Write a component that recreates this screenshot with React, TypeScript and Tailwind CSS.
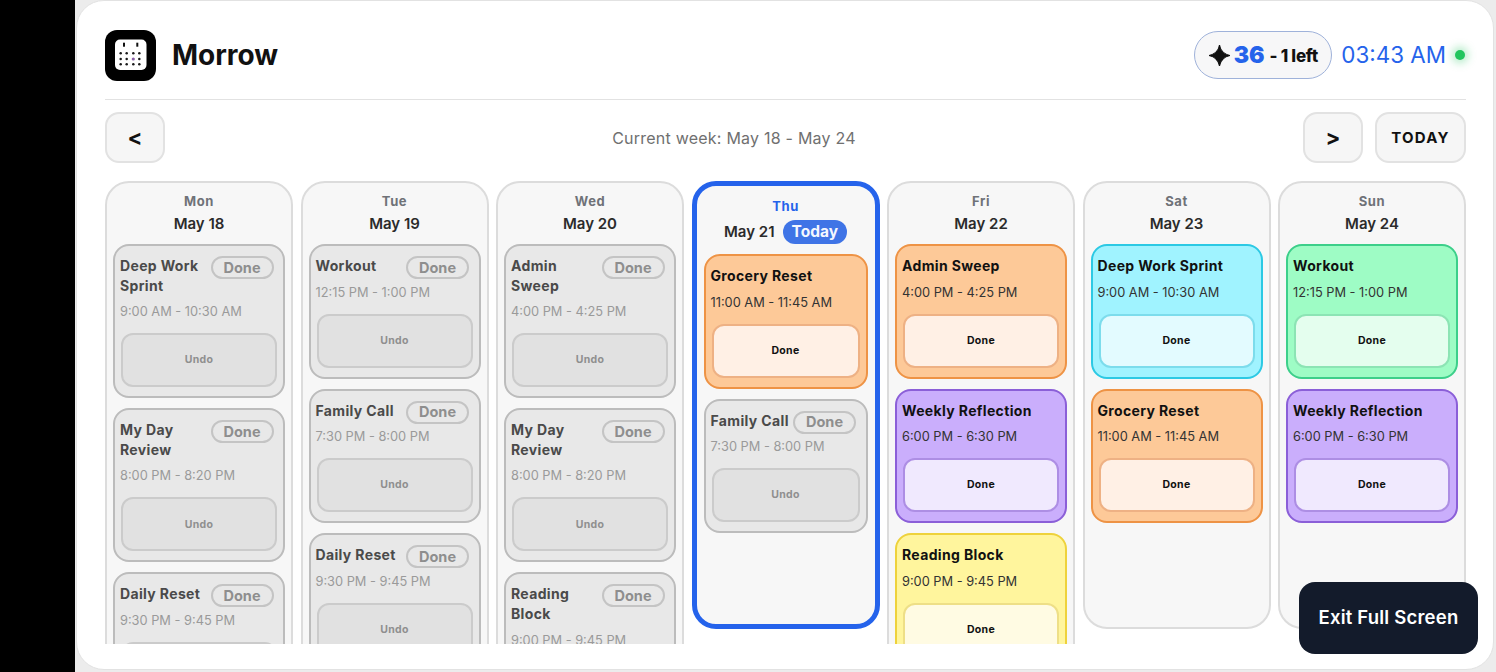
import React from "react";

type Tone = "gray" | "orange" | "purple" | "yellow" | "cyan" | "green";
type Task = { title: string; time: string; tone: Tone };

const tones: Record<Tone, { card: string; btn: string }> = {
  gray: { card: "bg-[#e8e8e8] border-[#bcbcbc]", btn: "bg-[#e1e1e1] border-[#cbcbcb] text-[#8f8f8f]" },
  orange: { card: "bg-[#fdc998] border-[#ee9345]", btn: "bg-[#fff0e5] border-[#eeb184] text-[#111111]" },
  purple: { card: "bg-[#caaefc] border-[#8b5fd8]", btn: "bg-[#f0e9fe] border-[#ad8ee4] text-[#111111]" },
  yellow: { card: "bg-[#fff59d] border-[#eed23c]", btn: "bg-[#fffbe3] border-[#eedf87] text-[#111111]" },
  cyan: { card: "bg-[#a0f3ff] border-[#2cc9e4]", btn: "bg-[#e3fbff] border-[#7cdcec] text-[#111111]" },
  green: { card: "bg-[#9efcc5] border-[#3ccf8a]", btn: "bg-[#e4feee] border-[#8ce4b4] text-[#111111]" },
};

const days: { dow: string; date: string; today?: boolean; tasks: Task[] }[] = [
  { dow: "Mon", date: "May 18", tasks: [
    { title: "Deep Work Sprint", time: "9:00 AM - 10:30 AM", tone: "gray" },
    { title: "My Day Review", time: "8:00 PM - 8:20 PM", tone: "gray" },
    { title: "Daily Reset", time: "9:30 PM - 9:45 PM", tone: "gray" },
  ] },
  { dow: "Tue", date: "May 19", tasks: [
    { title: "Workout", time: "12:15 PM - 1:00 PM", tone: "gray" },
    { title: "Family Call", time: "7:30 PM - 8:00 PM", tone: "gray" },
    { title: "Daily Reset", time: "9:30 PM - 9:45 PM", tone: "gray" },
  ] },
  { dow: "Wed", date: "May 20", tasks: [
    { title: "Admin Sweep", time: "4:00 PM - 4:25 PM", tone: "gray" },
    { title: "My Day Review", time: "8:00 PM - 8:20 PM", tone: "gray" },
    { title: "Reading Block", time: "9:00 PM - 9:45 PM", tone: "gray" },
  ] },
  { dow: "Thu", date: "May 21", today: true, tasks: [
    { title: "Grocery Reset", time: "11:00 AM - 11:45 AM", tone: "orange" },
    { title: "Family Call", time: "7:30 PM - 8:00 PM", tone: "gray" },
  ] },
  { dow: "Fri", date: "May 22", tasks: [
    { title: "Admin Sweep", time: "4:00 PM - 4:25 PM", tone: "orange" },
    { title: "Weekly Reflection", time: "6:00 PM - 6:30 PM", tone: "purple" },
    { title: "Reading Block", time: "9:00 PM - 9:45 PM", tone: "yellow" },
  ] },
  { dow: "Sat", date: "May 23", tasks: [
    { title: "Deep Work Sprint", time: "9:00 AM - 10:30 AM", tone: "cyan" },
    { title: "Grocery Reset", time: "11:00 AM - 11:45 AM", tone: "orange" },
  ] },
  { dow: "Sun", date: "May 24", tasks: [
    { title: "Workout", time: "12:15 PM - 1:00 PM", tone: "green" },
    { title: "Weekly Reflection", time: "6:00 PM - 6:30 PM", tone: "purple" },
  ] },
];

function Logo() {
  const rows = [53.3, 59, 64.3];
  const cols = [120.7, 126.7, 133.3, 139.3];
  return (
    <svg width="51" height="51" viewBox="105 30 51 51" className="shrink-0">
      <rect x="105" y="30" width="51" height="51" rx="12" fill="#000" />
      <rect x="115" y="39.5" width="31.5" height="30.5" rx="5" fill="#fff" />
      <rect x="123" y="42.7" width="2" height="4" fill="#111" />
      <rect x="136.3" y="42.7" width="2" height="4" fill="#111" />
      {rows.map((y, r) =>
        cols.map((x, c) => (
          <circle key={`${r}-${c}`} cx={x} cy={y} r={r === 1 && c === 2 ? 1.6 : 1.25} fill={r === 1 && c === 2 ? "#8b5fa8" : "#1a1a1a"} />
        ))
      )}
    </svg>
  );
}

function Card({ task }: { task: Task }) {
  const t = tones[task.tone];
  const muted = task.tone === "gray";
  return (
    <div className={`rounded-[16px] border-2 px-[6px] pt-[10px] pb-[9px] ${t.card}`}>
      <div className="flex items-start justify-between gap-[3px]">
        <div className={`mb-[8px] -ml-[1px] text-[14px] leading-[19.6px] font-bold tracking-[0.35px] ${muted ? "text-[#4a4a4a]" : "text-[#111111]"}`}>
          {task.title}
        </div>
        {muted && (
          <div className="mr-[3.5px] flex h-[23px] w-[63px] shrink-0 items-center justify-center rounded-full border-2 border-[#c4c4c4] pt-[1px] text-[14.5px] leading-none font-bold text-[#8e8e8e]">
            Done
          </div>
        )}
      </div>
      <div className={`-ml-[1px] text-[12.8px] leading-[18px] ${muted ? "text-[#9a9a9a]" : "text-[#333333]"}`}>{task.time}</div>
      <div className={`mt-[12px] flex h-[54px] items-center justify-center rounded-[12px] border-2 text-[10.5px] font-bold tracking-[0.3px] ${t.btn}`}>
        {muted ? "Undo" : "Done"}
      </div>
    </div>
  );
}

function Column({ day }: { day: (typeof days)[number] }) {
  return (
    <div
      className={`min-h-[448px] self-start rounded-[24px] bg-[#f7f7f7] ${
        day.today ? "border-[5px] border-[#2563eb] px-[7px] pb-[10px]" : "border-2 border-[#dcdcdc] px-[6px] pb-[10px]"
      }`}
    >
      <div className={`flex flex-col items-center ${day.today ? "h-[68px] pt-[11px]" : "h-[61px] pt-[9px]"}`}>
        <div className={`text-[13px] leading-[18px] font-bold tracking-[0.6px] ${day.today ? "text-[#2563eb]" : "text-[#6f7278]"}`}>{day.dow}</div>
        <div className={`flex items-center gap-[8px] text-[15px] leading-[22px] font-semibold text-[#2b2b2b] ${day.today ? "mt-[5px]" : "mt-[2.5px]"}`}>
          {day.date}
          {day.today && (
            <span className="flex h-[24px] items-center rounded-full bg-[#3f74e6] px-[9px] text-[15.5px] font-bold text-[#f4f7ff]">Today</span>
          )}
        </div>
      </div>
      <div className="flex flex-col gap-[10px]">
        {day.tasks.map((t) => (
          <Card key={t.title} task={t} />
        ))}
      </div>
    </div>
  );
}

const navBtn =
  "flex h-[51px] items-center justify-center rounded-[14px] border-2 border-[#e2e2e2] bg-[#f6f6f6] font-bold text-[#111111]";

export default function App() {
  return (
    <div className="relative flex h-[672px] w-full overflow-hidden bg-black font-['Inter',sans-serif]">
      <div className="w-[75px] shrink-0" />
      <div className="flex-1 bg-[#ececec] pr-[2px] pb-[2px] pl-[1px]">
        <div className="flex h-full flex-col rounded-[28px] border border-[#e2e2e2] bg-white pr-[27px] pb-[25px] pl-[28px]">
          <div className="flex h-[99px] shrink-0 items-center justify-between border-b border-[#e2e2e2] pt-[11px]">
            <div className="flex items-center gap-[16px]">
              <Logo />
              <div className="-mt-[2px] text-[28px] leading-none font-bold text-[#111111]">Morrow</div>
            </div>
            <div className="-mt-[1px] flex items-center">
              <div className="flex h-[48px] w-[138px] items-center justify-center gap-[4px] rounded-full border-[1.5px] border-[#9fb2da] bg-[#f7f7f8]">
                <svg width="21" height="21" viewBox="0 0 20 20">
                  <path d="M10 0 C10.8 5 13.5 8.6 20 10 C13.5 11.4 10.8 15 10 20 C9.2 15 6.5 11.4 0 10 C6.5 8.6 9.2 5 10 0 Z" fill="#111111" stroke="#111111" strokeWidth="1" strokeLinejoin="round" />
                </svg>
                <span className="text-[23px] leading-none font-black text-[#2563eb]">36</span>
                <span className="mt-[3px] ml-[1px] text-[17px] leading-none font-extrabold tracking-[-0.3px] text-[#111111]">- 1 left</span>
              </div>
              <div className="ml-[9px] text-[22.4px] leading-none text-[#2563eb]">03:43 AM</div>
              <div className="mr-[1px] ml-[9px] h-[10px] w-[10px] rounded-full bg-[#22c55e] shadow-[0_0_8px_3px_rgba(34,197,94,0.35)]" />
            </div>
          </div>
          <div className="mt-[12px] flex shrink-0 items-center justify-between">
            <div className={`${navBtn} w-[60px] text-[22px]`}>&lt;</div>
            <div className="text-[16px] tracking-[0.23px] text-[#707070]">Current week: May 18 - May 24</div>
            <div className="flex gap-[12px]">
              <div className={`${navBtn} w-[60px] text-[22px]`}>&gt;</div>
              <div className={`${navBtn} w-[91px] pt-[1px] text-[15px] tracking-[1.2px]`}>TODAY</div>
            </div>
          </div>
          <div className="mt-[18px] grid min-h-0 flex-1 grid-cols-7 items-start gap-[7.5px] overflow-hidden">
            {days.map((d) => (
              <Column key={d.dow} day={d} />
            ))}
          </div>
        </div>
      </div>
      <div className="absolute top-[582px] left-[1299px] flex h-[72px] w-[179px] items-center justify-center rounded-[16px] bg-[#131b2b] pb-[1px] text-[18.5px] font-semibold tracking-[0.2px] text-white">
        Exit Full Screen
      </div>
    </div>
  );
}
